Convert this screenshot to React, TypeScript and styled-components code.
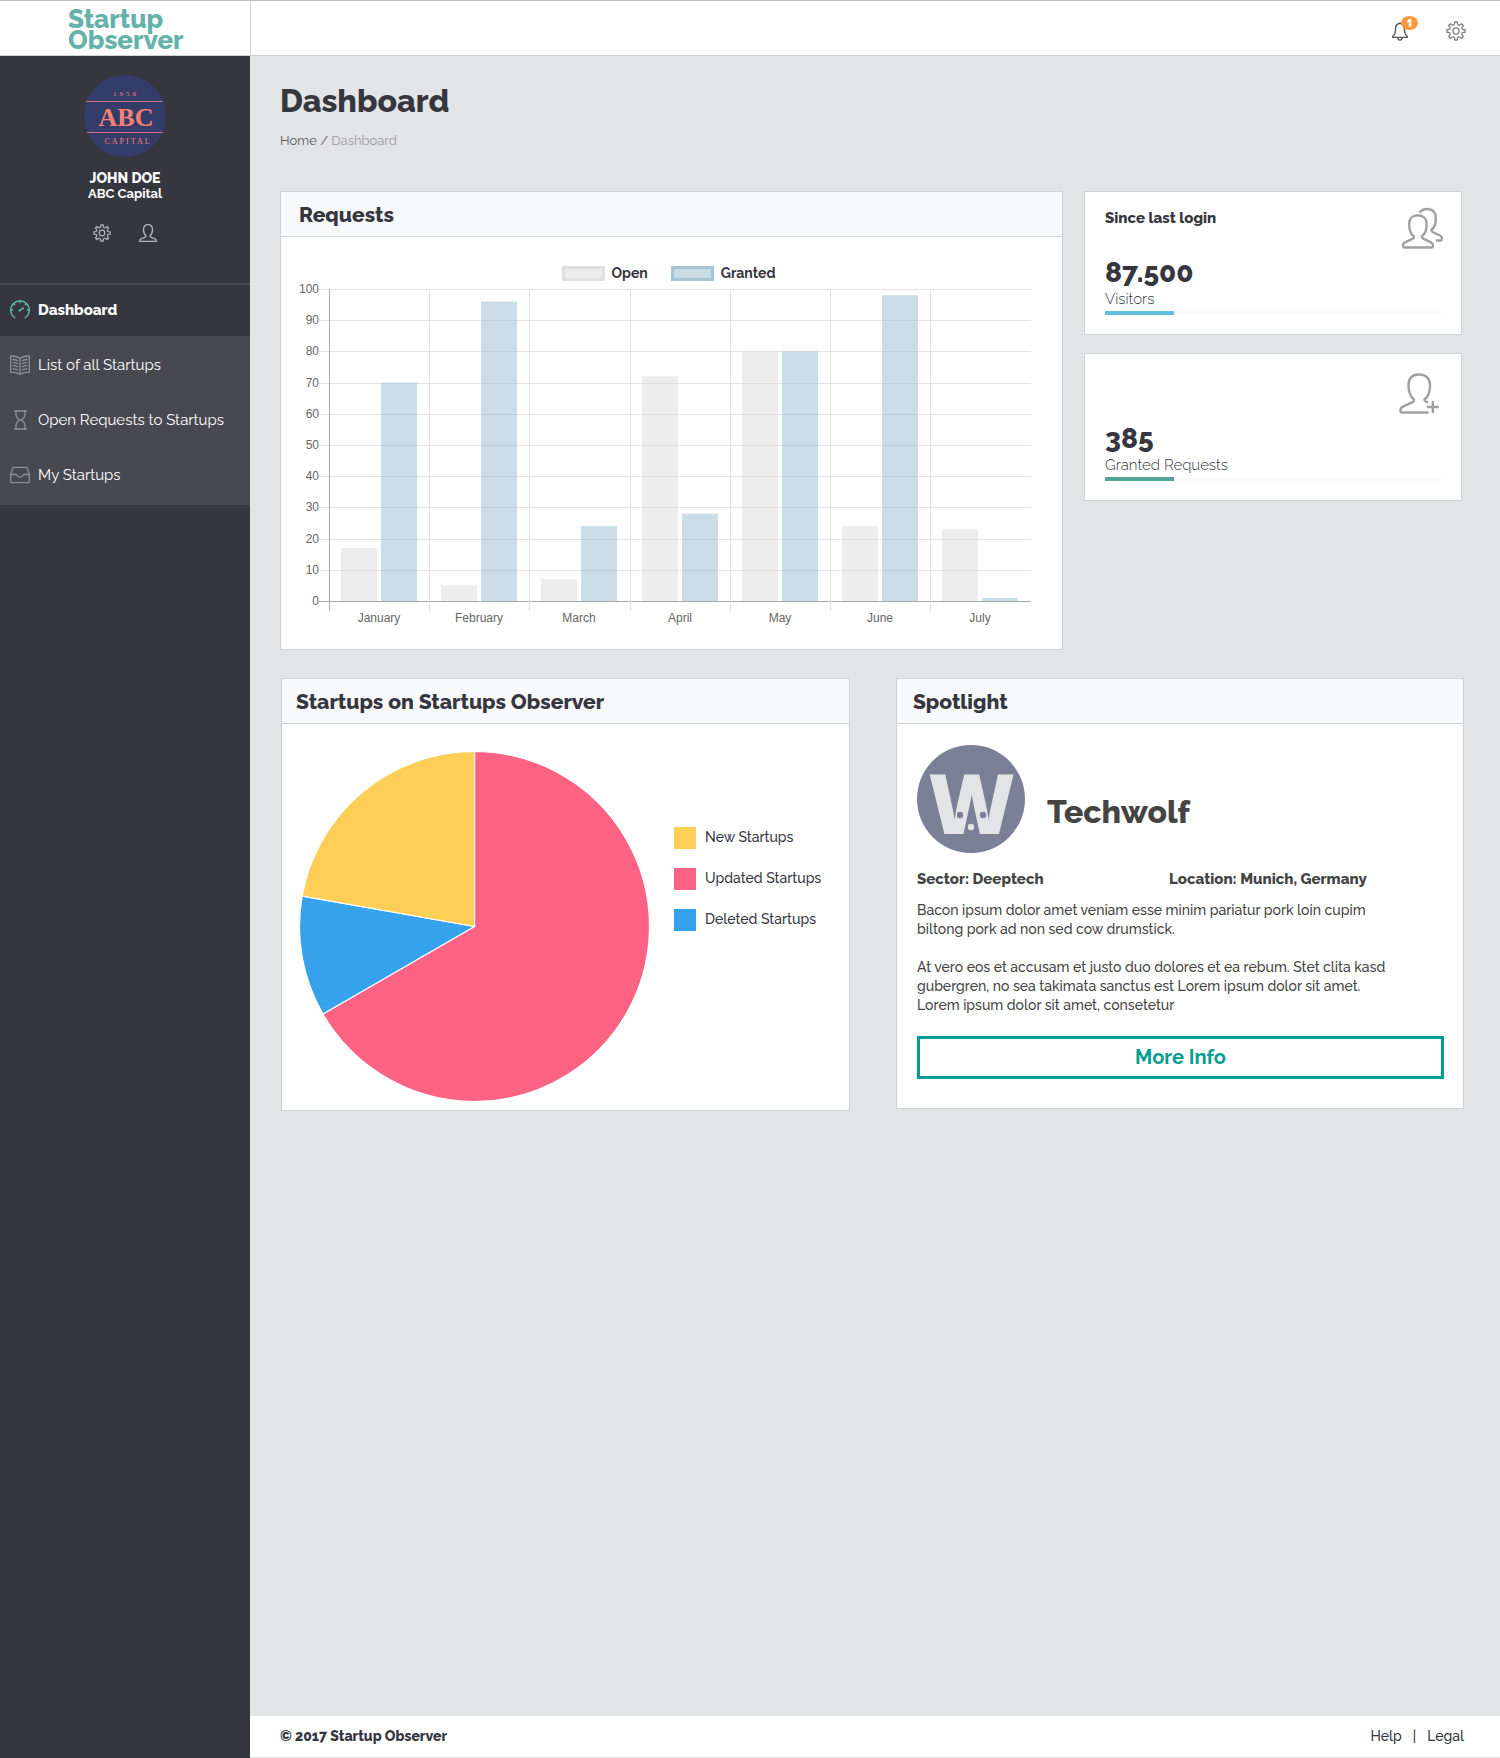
import React from 'react';
import styled, { createGlobalStyle } from 'styled-components';

const GlobalStyle = createGlobalStyle`
  *, *::before, *::after { box-sizing: border-box; }
  body {
    margin: 0;
    background: #e3e4e6;
    color: #36363f;
    font-family: Raleway, Lato, sans-serif;
    font-size: 15px;
    line-height: 20px;
  }
  h1, h2, h3, p, ul, dl, dd { margin: 0; padding: 0; }
  ul { list-style: none; }
  a { color: inherit; text-decoration: none; }
  button { font: inherit; cursor: pointer; }
  svg { display: block; overflow: visible; }
`;

/* ---------- page frame ---------- */

const Page = styled.div`
  display: flex;
  flex-direction: column;
  min-height: 100vh;
`;

const TopBar = styled.header`
  display: flex;
  height: 56px;
  background: #fff;
  border-top: 1px solid #bfbfbf;
  border-bottom: 1px solid #cfd1d3;
`;

const Brand = styled.a`
  flex: 0 0 251px;
  padding: 8px 0 0 68px;
  border-right: 1px solid #cfd1d3;
  color: #64b2a9;
  font-size: 26px;
  font-weight: 800;
  line-height: 21px;
`;

const TopActions = styled.div`
  display: flex;
  flex: 1;
  align-items: center;
  justify-content: flex-end;
  gap: 38px;
  padding: 6px 34px 0 0;
`;

const IconButton = styled.button<{ $color: string }>`
  position: relative;
  display: block;
  padding: 0;
  border: 0;
  background: none;
  color: ${(p) => p.$color};
`;

const Badge = styled.span`
  position: absolute;
  top: -6px;
  left: 9px;
  width: 17px;
  height: 14px;
  border-radius: 50%;
  background: #fc983c;
  color: #fff;
  font-family: 'Open Sans', sans-serif;
  font-size: 11px;
  font-weight: 800;
  line-height: 14px;
  text-align: center;
`;

const Body = styled.div`
  display: flex;
  flex: 1;
`;

const Sidebar = styled.aside`
  flex: 0 0 250px;
  background: #36363f;
  color: #fff;
`;

const Content = styled.div`
  display: flex;
  flex: 1;
  flex-direction: column;
  min-width: 0;
`;

/* ---------- sidebar ---------- */

const Profile = styled.div`
  display: flex;
  flex-direction: column;
  align-items: center;
  padding: 19px 0 41px;
  border-bottom: 2px solid #484850;
`;

const ProfileName = styled.strong`
  margin-top: 13px;
  font-size: 14px;
  font-weight: 800;
  line-height: 16px;
`;

const ProfileCompany = styled.span`
  font-size: 13px;
  font-weight: 700;
  line-height: 16px;
`;

const ProfileActions = styled.div`
  display: flex;
  gap: 28px;
  margin-top: 22px;
`;

const NavList = styled.ul`
  background: #484850;
  padding-bottom: 2px;
`;

const NavItem = styled.li`
  &:first-child {
    margin-bottom: 2px;
  }
`;

const NavLink = styled.a<{ $active?: boolean }>`
  display: flex;
  align-items: center;
  gap: 8px;
  height: ${(p) => (p.$active ? 51 : 55)}px;
  padding: 0 0 2px 10px;
  background: ${(p) => (p.$active ? '#36363f' : 'transparent')};
  font-size: 15px;
  font-weight: ${(p) => (p.$active ? 800 : 400)};

  svg {
    color: ${(p) => (p.$active ? '#62bdaf' : '#8f8f94')};
  }
`;

/* ---------- main area ---------- */

const Main = styled.main`
  flex: 1;
  padding: 25px 36px 40px 30px;
`;

const PageTitle = styled.h1`
  font-size: 32px;
  font-weight: 800;
  line-height: 40px;
`;

const Breadcrumb = styled.nav`
  margin: 10px 0 40px;
  color: #5c5c62;
  font-size: 13px;

  span {
    color: #9b9b9f;
  }
`;

const TopRow = styled.div`
  display: grid;
  grid-template-columns: 783fr 378fr;
  align-items: start;
  gap: 21px;
  padding-right: 2px;
`;

const BottomRow = styled.div`
  display: grid;
  grid-template-columns: 569fr 568fr;
  align-items: start;
  gap: 46px;
  margin-top: 28px;
  padding-left: 1px;
`;

const Card = styled.section`
  min-width: 0;
  background: #fff;
  border: 1px solid #ced1d5;
`;

const CardTitle = styled.h2<{ $inset: number }>`
  height: 45px;
  padding-left: ${(p) => p.$inset}px;
  border-bottom: 1px solid #ced1d5;
  background: #f8f9fb;
  font-size: 21px;
  font-weight: 800;
  line-height: 46px;
`;

const ChartLegend = styled.ul`
  display: flex;
  justify-content: center;
  gap: 23px;
  margin-top: 26px;
  padding-right: 6px;
`;

const ChartLegendItem = styled.li`
  display: flex;
  align-items: center;
  gap: 7px;
  font-size: 14px;
  font-weight: 700;
`;

const ChartKey = styled.span<{ $fill: string; $edge: string }>`
  width: 43px;
  height: 15px;
  border: 3px solid ${(p) => p.$edge};
  background: ${(p) => p.$fill};
`;

const ChartSvg = styled.svg`
  width: 100%;
  height: auto;
  font-family: 'Liberation Sans', Arial, sans-serif;
  font-size: 12px;
  fill: #666;
`;

const StatColumn = styled.div`
  display: grid;
  gap: 18px;
`;

const StatCard = styled(Card)<{ $height: number }>`
  display: flex;
  flex-direction: column;
  justify-content: space-between;
  min-height: ${(p) => p.$height}px;
  padding: 16px 19px 19px 20px;
`;

const StatHead = styled.div`
  display: flex;
  justify-content: space-between;
  color: #a0a0a2;

  svg {
    margin-left: auto;
  }
`;

const StatTitle = styled.h3`
  color: #36363f;
  font-size: 15px;
  font-weight: 800;
  line-height: 20px;
`;

const StatValue = styled.strong`
  display: block;
  font-size: 28px;
  font-weight: 800;
  line-height: 32px;
`;

const StatLabel = styled.span`
  display: block;
  font-size: 15px;
  font-weight: 300;
  line-height: 20px;
`;

const Track = styled.div`
  height: 4px;
  margin-top: 2px;
  background: #f9f9fa;
`;

const TrackFill = styled.div<{ $color: string }>`
  height: 100%;
  background: ${(p) => p.$color};
`;

const PieBody = styled.div`
  display: flex;
  gap: 24px;
  padding: 27px 18px 8px 17px;
`;

const PieSvg = styled.svg`
  flex: 0 1 351px;
  min-width: 0;
  height: auto;
`;

const PieLegend = styled.ul`
  display: grid;
  align-content: start;
  gap: 19px;
  padding-top: 76px;
`;

const PieLegendItem = styled.li`
  display: flex;
  align-items: flex-start;
  gap: 9px;
  font-size: 14px;
  font-weight: 500;
  line-height: 20px;
  white-space: nowrap;
`;

const Swatch = styled.span<{ $color: string }>`
  width: 22px;
  height: 22px;
  background: ${(p) => p.$color};
`;

const SpotlightBody = styled.div`
  padding: 21px 19px 29px 20px;
  color: #444;
`;

const SpotlightHead = styled.div`
  display: flex;
  align-items: flex-end;
  gap: 22px;
`;

const SpotlightName = styled.h3`
  padding-bottom: 21px;
  font-size: 32px;
  font-weight: 800;
  line-height: 40px;
`;

const Facts = styled.div`
  display: grid;
  grid-template-columns: 252fr 275fr;
  margin: 16px 0 12px;
  font-size: 15px;
  font-weight: 800;
`;

const Paragraph = styled.p`
  padding-right: 46px;
  font-size: 14px;
  font-weight: 500;
  line-height: 19px;

  & + & {
    margin-top: 19px;
  }
`;

const MoreButton = styled.button`
  display: block;
  width: 100%;
  height: 43px;
  margin-top: 21px;
  padding: 0 0 2px;
  border: 3px solid #019c93;
  background: #fff;
  color: #019c93;
  font-size: 20px;
  font-weight: 700;
`;

const Footer = styled.footer`
  display: flex;
  align-items: center;
  justify-content: space-between;
  height: 42px;
  padding: 0 36px 2px 30px;
  border-bottom: 1px solid #dcdddf;
  background: #fff;
  font-size: 14px;
`;

const Copyright = styled.span`
  font-weight: 800;
`;

const FooterLinks = styled.div`
  display: flex;
  gap: 11px;
  font-weight: 500;
`;

/* ---------- icons ---------- */

const polar = (radius: number, degrees: number) => {
  const a = (degrees * Math.PI) / 180;
  return `${(16 + radius * Math.sin(a)).toFixed(2)} ${(16 - radius * Math.cos(a)).toFixed(2)}`;
};

const gearPath =
  Array.from({ length: 8 }, (_, i) => {
    const a = i * 45;
    return `${i ? 'L' : 'M'}${polar(14.6, a - 8)}L${polar(14.6, a + 8)}L${polar(12, a + 11)}Q${polar(8.6, a + 22.5)} ${polar(12, a + 34)}`;
  }).join('') + 'Z';

const GearIcon = ({ size, stroke }: { size: number; stroke: number }) => (
  <svg width={size} height={size} viewBox="0 0 32 32" fill="none" stroke="currentColor" strokeWidth={stroke} strokeLinejoin="round" aria-hidden="true">
    <path d={gearPath} />
    <circle cx="16" cy="16" r="5" />
  </svg>
);

const BellIcon = () => (
  <svg width="16" height="19" viewBox="0 0 16 19" fill="none" stroke="currentColor" strokeWidth="1.4" strokeLinecap="round" strokeLinejoin="round" aria-hidden="true">
    <path d="M8 1.2c-3 .4-4.400 2.500-4.400 5.300 0 4.500-.9 6.200-2.700 7.700-.5.500-.3 1.200.4 1.200h13.400c.7 0 .9-.7.400-1.200-1.800-1.500-2.700-3.200-2.700-7.700 0-2.800-1.400-4.900-4.400-5.300z" />
    <path d="M5.800 15.600c.1 3.400 4.300 3.400 4.400 0" />
  </svg>
);

const UserIcon = () => (
  <svg width="18" height="18" viewBox="0 0 40 40" fill="none" stroke="currentColor" strokeWidth="3" strokeLinejoin="round" aria-hidden="true">
    <path d="M15.500 26C11 22.500 10 18 10 13 10 5 14 1.500 20 1.500S30 5 30 13c0 5-1 9.500-5.500 13-.5 2 .5 3 2.500 3.500l9 3.500c2.500 1 3 2 3 5.500H1c0-3.500.5-4.500 3-5.500l9-3.500c2-.5 3-1.500 2.500-3.500z" />
  </svg>
);

const UsersIcon = () => (
  <svg width="41" height="41" viewBox="-1 0 41 41" fill="none" stroke="currentColor" strokeWidth="2.400" strokeLinejoin="round" aria-hidden="true">
    <path d="M12 28.500C8.500 26 7 21.500 7.200 15.500 7.200 10.500 10.500 7.300 15.800 7.300s8.800 3.200 8.800 8.200c.2 6-1.400 10.500-4.800 13 .2 1.500 1 2.100 2.200 2.600l6 2.700c2.500 1.100 3 1.700 3 3.500 0 1.600-.4 2.200-1.500 2.200H2.500C1.400 39.500 1 38.900 1 37.300c0-1.800.5-2.400 3-3.500l6-2.700c1.200-.5 2-1.100 2-2.600z" />
    <path d="M17.500 4.500C19.500 2 22 1 25 1c5.500 0 8.800 3.500 8.800 9 .2 5-1.300 9.500-4.600 12 .3 1.500 1.300 2 2.300 2.500l4.500 2c3 1.200 4 2 4 4 0 1.400-.4 2-1.500 2H34" />
  </svg>
);

const AddUserIcon = () => (
  <svg width="43" height="44" viewBox="0 -3 43 44" fill="none" stroke="currentColor" strokeWidth="2.400" strokeLinejoin="round" aria-hidden="true">
    <path d="M29.500 39.500H3c-1.100 0-1.500-.5-1.500-1.500 0-3 .5-3.600 3-4.700l8-3.600c1.800-.7 2.800-1.600 2.500-3.200C11 23.500 9.500 19 9.500 12.500 9.500 5 13.500 1.500 20 1.500S31 5 31 12.500c0 6.500-1.500 11-5.500 14-.2 1.400.8 2 3.500 3" />
    <path d="M33.800 28v12M27.800 34h12" />
  </svg>
);

const navIconProps = {
  width: 20,
  height: 20,
  viewBox: '0 0 20 20',
  fill: 'none',
  stroke: 'currentColor',
  strokeWidth: 1.3,
  strokeLinecap: 'round' as const,
  strokeLinejoin: 'round' as const,
  'aria-hidden': true,
};

const GaugeIcon = () => (
  <svg {...navIconProps}>
    <path d="M4.800 17.800A9.300 9.300 0 1 1 15.200 17.800" />
    <path d="M10 1v1.800M.8 10h1.800M17.400 10h1.800M3.500 3.600l1.200 1.200M16.500 3.600l-1.200 1.200" />
    <path d="M9.400 10.700l4.200-2.800" strokeWidth="1.500" />
    <circle cx="9.500" cy="10.600" r="1" fill="currentColor" stroke="none" />
  </svg>
);

const BookIcon = () => (
  <svg {...navIconProps}>
    <path d="M10 3.200C7.500 1.600 4.500 1 .7 1v16.200c3.800 0 6.800.6 9.300 2 2.500-1.400 5.500-2 9.300-2V1C15.500 1 12.500 1.600 10 3.200zM10 3.200v16" />
    <path d="M3 4.500c1.800.1 3.200.5 4.600 1.100M3 7.600c1.800.1 3.200.5 4.600 1.100M3 10.700c1.800.1 3.200.5 4.600 1.100M3 13.800c1.800.1 3.200.5 4.600 1.100M17 4.500c-1.800.1-3.200.5-4.600 1.100M17 7.600c-1.800.1-3.200.5-4.600 1.100M17 10.700c-1.800.1-3.200.5-4.600 1.100M17 13.800c-1.800.1-3.200.5-4.600 1.100" />
  </svg>
);

const HourglassIcon = () => (
  <svg {...navIconProps}>
    <path d="M4.500 1h12M4.500 19h12" />
    <path d="M6 1v3.500c0 3 1.500 4 3.500 5.500C7.500 11.500 6 12.500 6 15.500V19M15 1v3.500c0 3-1.500 4-3.500 5.500 2 1.500 3.500 2.500 3.500 5.500V19" />
    <path d="M9.500 10h2" />
  </svg>
);

const TrayIcon = () => (
  <svg {...navIconProps}>
    <path d="M.7 9.500L3 2.400h14l2.300 7.100v7.300c0 .6-.3.900-.9.900H1.600c-.6 0-.9-.3-.9-.9z" />
    <path d="M.7 9.500h5.500c.8 0 .8 2.700 3.800 2.700s3-2.700 3.800-2.700h5.500" />
  </svg>
);

const AbcLogo = () => (
  <svg width="82" height="82" viewBox="0 0 82 82" role="img" aria-label="ABC Capital" fontFamily="'Liberation Serif', serif" textAnchor="middle" fill="#fa8072">
    <circle cx="41" cy="41" r="41" fill="#343c69" />
    <text x="42" y="21" fontSize="7" letterSpacing="3">1956</text>
    <text x="42" y="51" fontSize="26" fontWeight="700">ABC</text>
    <text x="44" y="69" fontSize="8" letterSpacing="2">CAPITAL</text>
    <path d="M2 26.500h77M3 57.500h76" stroke="#cf6f75" />
  </svg>
);

const WolfLogo = () => (
  <svg width="108" height="108" viewBox="0 0 108 108" role="img" aria-label="Techwolf logo">
    <circle cx="54" cy="54" r="54" fill="#7a8197" />
    <text x="54.500" y="89" textAnchor="middle" fontFamily="'Open Sans', sans-serif" fontSize="83" fontWeight="800" fill="#e3e4e6">W</text>
    <circle cx="43" cy="70" r="3.200" fill="#7a8197" />
    <circle cx="66" cy="70" r="3.200" fill="#7a8197" />
    <circle cx="54" cy="82" r="3.200" fill="#e3e4e6" />
  </svg>
);

/* ---------- charts ---------- */

const months = [
  { name: 'January', open: 17, granted: 70 },
  { name: 'February', open: 5, granted: 96 },
  { name: 'March', open: 7, granted: 24 },
  { name: 'April', open: 72, granted: 28 },
  { name: 'May', open: 80, granted: 80 },
  { name: 'June', open: 24, granted: 98 },
  { name: 'July', open: 23, granted: 1 },
];

const LEFT = 48;
const RIGHT = 750;
const ZERO = 318;
const UNIT = 3.12;
const STEP = (RIGHT - LEFT) / months.length;

const BarChart = () => (
  <ChartSvg viewBox="0 0 781 366" role="img" aria-label="Open and granted requests by month">
    {Array.from({ length: 11 }, (_, i) => {
      const y = Math.round(ZERO - i * 10 * UNIT);
      return (
        <g key={i}>
          <path d={`M${LEFT - 10} ${y + 0.5}H${RIGHT}`} stroke={i ? '#e3e3e3' : '#a9a9a9'} />
          <text x={LEFT - 10} y={y + 4} textAnchor="end">{i * 10}</text>
        </g>
      );
    })}
    {months.map((m, i) => {
      const x = Math.floor(LEFT + 0.2 + i * STEP);
      return (
        <g key={m.name}>
          <path d={`M${x + 0.5} 6V328`} stroke={i ? '#e0e0e0' : '#a9a9a9'} />
          <rect x={x + 12} y={ZERO - m.open * UNIT} width="36" height={m.open * UNIT} fill="rgba(220,220,220,0.5)" />
          <rect x={x + 52} y={ZERO - m.granted * UNIT} width="36" height={m.granted * UNIT} fill="rgba(151,187,205,0.5)" />
          <text x={x + 50} y="339" textAnchor="middle">{m.name}</text>
        </g>
      );
    })}
  </ChartSvg>
);

const slices = [
  { from: 0, to: 240, color: '#ff6384' },
  { from: 240, to: 280, color: '#36a2eb' },
  { from: 280, to: 360, color: '#ffce56' },
];

const rim = (degrees: number) => {
  const a = (degrees * Math.PI) / 180;
  return `${175 + 174.5 * Math.sin(a)} ${175 - 174.5 * Math.cos(a)}`;
};

const PieChart = () => (
  <PieSvg viewBox="0 0 350 350" role="img" aria-label="Share of new, updated and deleted startups">
    {slices.map((s) => (
      <path
        key={s.color}
        d={`M175 175L${rim(s.from)}A174.500 174.500 0 ${s.to - s.from > 180 ? 1 : 0} 1 ${rim(s.to)}Z`}
        fill={s.color}
        stroke="#fff"
        strokeWidth="1.200"
      />
    ))}
  </PieSvg>
);

/* ---------- data ---------- */

const navItems = [
  { label: 'Dashboard', icon: <GaugeIcon />, active: true },
  { label: 'List of all Startups', icon: <BookIcon /> },
  { label: 'Open Requests to Startups', icon: <HourglassIcon /> },
  { label: 'My Startups', icon: <TrayIcon /> },
];

const pieKeys = [
  { label: 'New Startups', color: '#ffce56' },
  { label: 'Updated Startups', color: '#ff6384' },
  { label: 'Deleted Startups', color: '#36a2eb' },
];

const stats = [
  { title: 'Since last login', value: '87.500', label: 'Visitors', color: '#60c0de', percent: 20.5, height: 144, icon: <UsersIcon /> },
  { title: '', value: '385', label: 'Granted Requests', color: '#51a698', percent: 20.5, height: 148, icon: <AddUserIcon /> },
];

export default function App() {
  return (
    <Page>
      <GlobalStyle />
      <TopBar>
        <Brand href="#">
          Startup
          <br />
          Observer
        </Brand>
        <TopActions>
          <IconButton $color="#55555a" aria-label="Notifications">
            <BellIcon />
            <Badge>1</Badge>
          </IconButton>
          <IconButton $color="#7d7d80" aria-label="Settings">
            <GearIcon size={20} stroke={2} />
          </IconButton>
        </TopActions>
      </TopBar>
      <Body>
        <Sidebar>
          <Profile>
            <AbcLogo />
            <ProfileName>JOHN DOE</ProfileName>
            <ProfileCompany>ABC Capital</ProfileCompany>
            <ProfileActions>
              <IconButton $color="#b4b4b8" aria-label="Account settings">
                <GearIcon size={18} stroke={2.2} />
              </IconButton>
              <IconButton $color="#b4b4b8" aria-label="Profile">
                <UserIcon />
              </IconButton>
            </ProfileActions>
          </Profile>
          <nav>
            <NavList>
              {navItems.map((item) => (
                <NavItem key={item.label}>
                  <NavLink href="#" $active={item.active}>
                    {item.icon}
                    {item.label}
                  </NavLink>
                </NavItem>
              ))}
            </NavList>
          </nav>
        </Sidebar>
        <Content>
          <Main>
            <PageTitle>Dashboard</PageTitle>
            <Breadcrumb aria-label="Breadcrumb">
              <a href="#">Home</a> / <span>Dashboard</span>
            </Breadcrumb>
            <TopRow>
              <Card>
                <CardTitle $inset={18}>Requests</CardTitle>
                <ChartLegend>
                  <ChartLegendItem>
                    <ChartKey $fill="#ececec" $edge="#e0e0e0" />
                    Open
                  </ChartLegendItem>
                  <ChartLegendItem>
                    <ChartKey $fill="#cadde6" $edge="#a7c5d4" />
                    Granted
                  </ChartLegendItem>
                </ChartLegend>
                <BarChart />
              </Card>
              <StatColumn>
                {stats.map((s) => (
                  <StatCard key={s.label} $height={s.height}>
                    <StatHead>
                      {s.title && <StatTitle>{s.title}</StatTitle>}
                      {s.icon}
                    </StatHead>
                    <div>
                      <StatValue>{s.value}</StatValue>
                      <StatLabel>{s.label}</StatLabel>
                      <Track role="progressbar" aria-label={s.label} aria-valuenow={s.percent}>
                        <TrackFill $color={s.color} style={{ width: `${s.percent}%` }} />
                      </Track>
                    </div>
                  </StatCard>
                ))}
              </StatColumn>
            </TopRow>
            <BottomRow>
              <Card>
                <CardTitle $inset={14}>Startups on Startups Observer</CardTitle>
                <PieBody>
                  <PieChart />
                  <PieLegend>
                    {pieKeys.map((k) => (
                      <PieLegendItem key={k.label}>
                        <Swatch $color={k.color} />
                        {k.label}
                      </PieLegendItem>
                    ))}
                  </PieLegend>
                </PieBody>
              </Card>
              <Card>
                <CardTitle $inset={16}>Spotlight</CardTitle>
                <SpotlightBody>
                  <SpotlightHead>
                    <WolfLogo />
                    <SpotlightName>Techwolf</SpotlightName>
                  </SpotlightHead>
                  <Facts>
                    <span>Sector: Deeptech</span>
                    <span>Location: Munich, Germany</span>
                  </Facts>
                  <Paragraph>
                    Bacon ipsum dolor amet veniam esse minim pariatur pork loin cupim biltong pork ad non sed cow drumstick.
                  </Paragraph>
                  <Paragraph>
                    At vero eos et accusam et justo duo dolores et ea rebum. Stet clita kasd gubergren, no sea takimata
                    sanctus est Lorem ipsum dolor sit amet. Lorem ipsum dolor sit amet, consetetur
                  </Paragraph>
                  <MoreButton>More Info</MoreButton>
                </SpotlightBody>
              </Card>
            </BottomRow>
          </Main>
          <Footer>
            <Copyright>© 2017 Startup Observer</Copyright>
            <FooterLinks>
              <a href="#">Help</a>
              <span>|</span>
              <a href="#">Legal</a>
            </FooterLinks>
          </Footer>
        </Content>
      </Body>
    </Page>
  );
}
